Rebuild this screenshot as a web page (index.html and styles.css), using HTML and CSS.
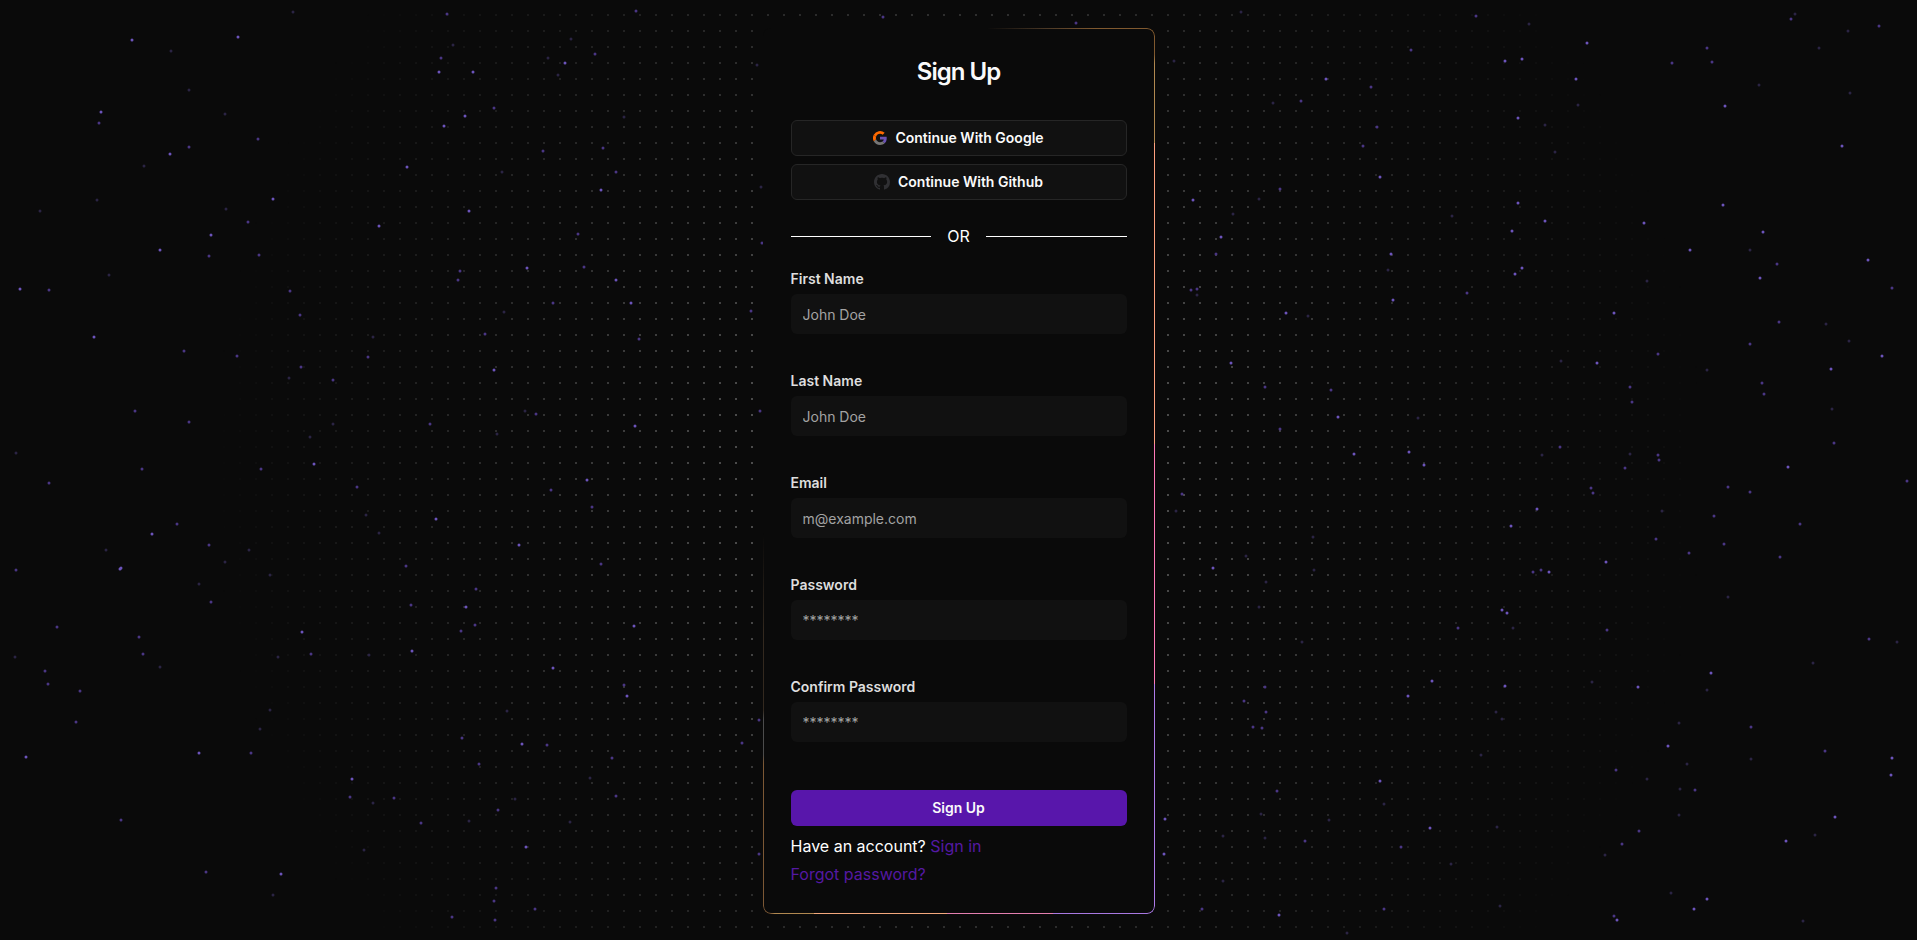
FILE: index.html
```html
<!DOCTYPE html>
<html lang="en">
<head>
    <meta charset="UTF-8">
    <meta name="viewport" content="width=device-width, initial-scale=1.0">
    <title>Sign Up</title>
    <link rel="stylesheet" href="styles.css">
</head>
<body>
    <div class="dots"></div>
    <svg class="stars" id="stars" viewBox="0 0 1917 940" preserveAspectRatio="xMidYMid slice" aria-hidden="true"></svg>

    <main class="page">
        <div class="card">
            <h1>Sign Up</h1>

            <div class="social">
                <button type="button" class="btn outline">
                    <svg class="icon-google" viewBox="0 0 24 24" aria-hidden="true">
                        <path fill="#6b52b5" d="M23.5 12.3c0-.8-.1-1.6-.2-2.3H12v4.5h6.5a5.500 5.500 0 0 1-2.400 3.600l3.900 3c2.300-2.100 3.500-5.200 3.500-8.800z"/>
                        <path fill="#757575" d="M12 24c3.200 0 6-1.100 8-2.900l-3.900-3c-1.100.7-2.500 1.200-4.100 1.200-3.100 0-5.800-2.100-6.700-5l-4 3.100C3.300 21.300 7.300 24 12 24z"/>
                        <path fill="#ff6a00" d="M5.300 14.300a7.200 7.200 0 0 1 0-4.600l-4-3.100a12 12 0 0 0 0 10.800z"/>
                        <path fill="#ff6a00" d="M12 4.800c1.800 0 3.300.6 4.600 1.800L20 3.200A12 12 0 0 0 1.300 6.600l4 3.100c.9-2.800 3.600-4.900 6.700-4.900z"/>
                    </svg>
                    Continue With Google
                </button>
                <button type="button" class="btn outline">
                    <svg class="icon-github" viewBox="0 0 16 16" aria-hidden="true">
                        <path fill="#303033" d="M8 0C3.580 0 0 3.580 0 8c0 3.540 2.290 6.530 5.470 7.590.4.070.55-.17.55-.38 0-.19-.01-.82-.01-1.490-2.010.37-2.530-.49-2.690-.94-.09-.23-.48-.94-.82-1.130-.28-.15-.68-.52-.01-.53.63-.01 1.080.58 1.230.82.72 1.210 1.870.87 2.330.66.070-.52.28-.87.51-1.070-1.780-.2-3.640-.89-3.640-3.950 0-.87.31-1.590.82-2.150-.08-.2-.36-1.020.08-2.120 0 0 .67-.21 2.200.82.64-.18 1.320-.27 2-.27s1.360.09 2 .27c1.530-1.040 2.200-.82 2.200-.82.44 1.100.16 1.920.08 2.120.51.56.82 1.270.82 2.150 0 3.070-1.870 3.750-3.650 3.950.29.25.54.73.54 1.480 0 1.070-.01 1.930-.01 2.200 0 .21.15.46.55.38A8.010 8.010 0 0 0 16 8c0-4.420-3.580-8-8-8z"/>
                    </svg>
                    Continue With Github
                </button>
            </div>

            <div class="divider">OR</div>

            <form>
                <div class="field">
                    <label for="firstName">First Name</label>
                    <input id="firstName" type="text" placeholder="John Doe">
                </div>
                <div class="field">
                    <label for="lastName">Last Name</label>
                    <input id="lastName" type="text" placeholder="John Doe">
                </div>
                <div class="field">
                    <label for="email">Email</label>
                    <input id="email" type="email" placeholder="m@example.com">
                </div>
                <div class="field">
                    <label for="password">Password</label>
                    <input id="password" type="password" placeholder="********">
                </div>
                <div class="field">
                    <label for="confirmPassword">Confirm Password</label>
                    <input id="confirmPassword" type="password" placeholder="********">
                </div>
                <button type="submit" class="btn primary">Sign Up</button>
            </form>

            <div class="links">
                <p>Have an account? <a href="#signin">Sign in</a></p>
                <p><a href="#forgot">Forgot password?</a></p>
            </div>
        </div>
    </main>
    <script src="script.js"></script>
</body>
</html>
```

FILE: styles.css
```css
* {
    box-sizing: border-box;
}
body {
    margin: 0;
    font-family: "Inter", sans-serif;
    font-size: 16px;
    line-height: 24px;
    background: #0a0a0a;
    color: #ffffff;
}
h1, p {
    margin: 0;
}

/* Background */
.dots, .stars {
    position: fixed;
    inset: 0;
    width: 100%;
    height: 100%;
    pointer-events: none;
}
.dots {
    background-image: conic-gradient(from 90deg at 14px 14px, #666666 90deg, transparent 0);
    background-size: 16px 16px;
    background-position: 1px 0;
    -webkit-mask-image: radial-gradient(circle, #000000, transparent 70%);
    mask-image: radial-gradient(circle, #000000, transparent 70%);
}
.star-1 {
    fill: #2b2444;
}
.star-2 {
    fill: #4a3684;
}
.star-3 {
    fill: #6c54bb;
}

.page {
    position: relative;
    min-height: 100vh;
    display: flex;
    align-items: center;
    justify-content: center;
    padding: 18px 16px 16px;
}

/* Card */
.card {
    position: relative;
    width: 100%;
    max-width: 392px;
    padding: 28px;
    border-radius: 8px;
    background: #0a0a0a;
}
/* shining edge: one strip per side, masked down to a 1px ring */
.card::before {
    content: "";
    position: absolute;
    inset: 0;
    padding: 1px;
    border-radius: inherit;
    pointer-events: none;
    background:
        linear-gradient(to bottom, #80592f 3%, #b08850 4% 13%, #ffa07f 13% 47%, #ff79b8 47% 74%, #ae7bea 74%) right / 8px 100% no-repeat,
        linear-gradient(to bottom, transparent 57%, #33291f 68% 77%, #4c4c4c 78% 82%, #7c5835 83%) left / 8px 100% no-repeat,
        linear-gradient(to right, transparent 57%, #4a3826 72%, #80592f 85%) top / 100% 8px no-repeat,
        linear-gradient(to right, #7c5835 2%, #b08850 3% 13%, #f3a87c 13% 47%, #e47fb0 47% 74%, #a878e2 74%) bottom / 100% 8px no-repeat;
    -webkit-mask: linear-gradient(#000 0 0) content-box exclude, linear-gradient(#000 0 0);
    mask: linear-gradient(#000 0 0) content-box exclude, linear-gradient(#000 0 0);
}
.card h1 {
    font-size: 24px;
    line-height: 32px;
    font-weight: 600;
    letter-spacing: -1px;
    text-align: center;
    color: #fafafa;
}

/* Buttons */
.btn {
    display: flex;
    align-items: center;
    justify-content: center;
    gap: 8px;
    width: 100%;
    height: 36px;
    padding: 0 16px;
    border: none;
    border-radius: 6px;
    font-family: inherit;
    font-size: 14px;
    line-height: 20px;
    font-weight: 600;
    color: #fafafa;
    cursor: pointer;
}
.btn.outline {
    background: #111111;
    border: 1px solid #262626;
}
.btn.outline:hover {
    background: #1c1c1c;
}
.btn.primary {
    background: #5816ab;
}
.btn.primary:hover {
    background: #4a1191;
}
.icon-google {
    width: 14px;
    height: 14px;
}
.icon-github {
    width: 16px;
    height: 16px;
}
.social {
    display: flex;
    flex-direction: column;
    gap: 8px;
    margin-top: 32px;
}

.divider {
    display: flex;
    align-items: center;
    gap: 16px;
    margin: 24px 0;
}
.divider::before, .divider::after {
    content: "";
    flex: 1;
    height: 1px;
    background: #ffffff;
}

/* Form */
.field {
    display: flex;
    flex-direction: column;
    gap: 8px;
    margin-bottom: 40px;
}
.field label {
    font-size: 14px;
    line-height: 14px;
    font-weight: 600;
    color: #dedede;
}
.field input {
    width: 100%;
    height: 40px;
    padding: 8px 12px;
    border: none;
    border-radius: 6px;
    background: #111111;
    font-family: inherit;
    font-size: 14px;
    color: #fafafa;
}
.field input::placeholder {
    color: #a3a3a3;
}
.field input:focus {
    outline: 1px solid #5816ab;
}
form .btn {
    margin-top: 48px;
}

.links {
    display: flex;
    flex-direction: column;
    gap: 4px;
    margin-top: 8px;
}
.links a {
    color: #5519a3;
    text-decoration: none;
}
.links a:hover {
    text-decoration: underline;
}
```

FILE: script.js
```js
// x, y, brightness (1 = faint, 3 = bright)
const stars = [
    [293,12,1],[447,14,2],[636,11,2],[132,40,3],[238,37,3],[171,51,1],[453,45,1],[441,58,2],[439,72,3],[473,72,3],
    [571,39,1],[548,58,1],[565,63,3],[595,54,2],[558,75,1],[189,90,1],[101,112,3],[99,123,2],[225,114,1],[494,108,2],
    [465,116,3],[444,126,3],[258,139,2],[189,147,2],[170,154,3],[144,166,1],[624,117,1],[543,151,2],[603,148,2],[407,167,3],
    [502,172,1],[616,172,2],[601,190,3],[469,211,3],[273,199,3],[97,200,1],[40,211,1],[226,209,1],[248,222,2],[211,235,3],
    [379,226,3],[160,250,3],[209,256,2],[259,255,2],[578,234,2],[527,268,3],[584,267,2],[460,271,2],[458,280,2],[616,280,3],
    [109,275,1],[20,289,3],[49,290,2],[290,291,2],[553,303,2],[631,303,3],[300,315,2],[504,312,1],[94,337,3],[373,337,1],
    [485,334,2],[639,339,2],[184,351,2],[237,356,2],[368,357,2],[301,367,2],[289,378,1],[333,380,2],[494,370,3],[135,411,2],
    [189,422,2],[333,424,1],[430,424,2],[525,411,1],[536,414,2],[497,434,1],[635,426,3],[310,437,1],[16,453,1],[314,464,3],
    [142,469,2],[261,469,2],[49,483,2],[357,487,2],[551,490,2],[587,480,3],[592,507,2],[366,515,1],[436,519,3],[177,524,2],
    [152,534,3],[379,533,1],[209,545,2],[519,545,3],[106,550,1],[249,550,1],[121,568,3],[120,569,3],[16,570,2],[225,562,1],
    [406,566,2],[601,564,2],[270,575,1],[199,584,1],[476,589,2],[211,602,2],[411,605,2],[466,607,3],[57,627,2],[475,625,2],
    [461,631,2],[302,632,3],[634,626,3],[139,637,2],[311,654,2],[143,654,2],[412,651,3],[369,655,1],[278,657,1],[15,657,1],
    [160,667,1],[553,668,3],[45,671,2],[48,684,2],[80,691,2],[624,685,2],[627,696,3],[270,710,1],[507,711,1],[76,722,2],
    [260,729,1],[462,738,2],[522,744,3],[547,745,2],[26,757,3],[199,753,3],[251,753,2],[612,758,2],[479,764,2],[352,779,3],
    [590,778,1],[350,797,2],[394,798,2],[373,803,1],[616,796,2],[515,799,1],[498,810,2],[469,821,1],[421,823,2],[570,822,1],
    [121,820,2],[364,850,1],[526,847,3],[206,872,2],[281,874,3],[273,895,1],[496,888,2],[494,901,2],[535,909,2],[452,917,2],
    [495,920,2],[883,17,2],[1076,23,2],[757,65,1],[761,187,1],[762,243,2],[751,311,2],[760,411,2],[759,720,2],[759,854,2],
    [742,743,2],[1476,16,2],[1529,24,1],[1791,19,2],[1795,14,1],[1241,12,1],[1587,43,3],[1411,50,2],[1522,59,3],[1505,61,3],
    [1707,48,2],[1712,62,2],[1672,63,2],[1819,48,1],[1848,31,1],[1879,26,2],[1174,61,1],[1326,79,3],[1371,87,2],[1576,79,3],
    [1759,85,1],[1301,101,2],[1273,103,1],[1578,105,1],[1725,106,3],[1850,93,1],[1377,127,2],[1518,118,3],[1545,125,1],[1363,146,2],
    [1842,146,3],[1555,152,1],[1380,177,3],[1280,189,2],[1193,200,3],[1259,199,1],[1518,203,3],[1723,205,3],[1452,216,1],[1233,214,1],
    [1545,221,3],[1644,223,3],[1512,231,3],[1763,232,3],[1221,237,3],[1216,254,2],[1391,254,3],[1690,250,3],[1750,250,1],[1868,260,3],
    [1777,264,2],[1522,268,3],[1515,274,3],[1760,278,3],[1388,270,1],[1647,281,1],[1191,290,2],[1197,289,2],[1197,295,1],[1467,293,2],
    [1892,288,2],[1393,300,3],[1286,313,3],[1308,316,1],[1614,313,3],[1779,322,2],[1826,324,1],[1750,344,2],[1849,341,1],[1882,356,3],
    [1658,354,2],[1597,363,3],[1561,361,1],[1231,363,3],[1707,370,1],[1831,369,3],[1762,383,2],[1265,387,2],[1331,390,2],[1630,387,2],
    [1764,394,2],[1632,402,2],[1832,409,1],[1338,417,3],[1418,418,1],[1280,429,2],[1834,443,2],[1560,447,2],[1354,454,3],[1409,452,3],
    [1542,455,1],[1630,454,1],[1658,455,2],[1424,465,3],[1659,460,2],[1788,467,3],[1625,468,2],[1591,488,2],[1593,493,2],[1728,487,2],
    [1750,492,2],[1907,481,2],[1182,494,2],[1176,511,1],[1537,509,3],[1662,511,1],[1714,516,2],[1511,526,3],[1313,537,1],[1800,524,2],
    [1656,539,2],[1724,544,2],[1689,553,2],[1246,556,1],[1780,557,2],[1606,562,3],[1213,568,3],[1314,570,1],[1533,572,2],[1541,570,2],
    [1549,572,3],[1266,582,1],[1728,597,1],[1259,607,1],[1502,610,3],[1507,613,3],[1458,628,2],[1513,628,1],[1607,630,2],[1869,639,2],
    [1897,642,1],[1302,642,1],[1813,663,1],[1711,673,3],[1432,681,3],[1592,682,1],[1265,687,2],[1505,686,3],[1638,687,3],[1707,690,1],
    [1408,696,3],[1244,701,2],[1266,712,2],[1496,712,1],[1502,719,1],[1679,723,1],[1253,727,2],[1262,728,2],[1751,727,2],[1668,746,3],
    [1481,755,1],[1825,751,2],[1892,758,3],[1751,759,1],[1687,764,1],[1616,770,2],[1891,775,3],[1647,779,1],[1380,781,3],[1680,789,1],
    [1695,790,2],[1277,791,2],[1384,804,1],[1261,814,1],[1165,819,3],[1679,815,1],[1835,817,3],[1329,820,1],[1430,828,3],[1497,827,1],
    [1639,831,2],[1223,836,1],[1265,838,1],[1815,835,1],[1786,841,3],[1305,841,2],[1622,844,2],[1401,847,2],[1164,854,3],[1605,855,1],
    [1451,864,1],[1223,881,1],[1671,893,1],[1707,899,3],[1500,906,1],[1202,909,2],[1384,909,2],[1694,909,3],[1279,915,3],[1614,916,2],
    [1617,920,3],[1803,921,1],[1347,933,1]
];

const sky = document.getElementById('stars');
stars.forEach(([x, y, level]) => {
    const star = document.createElementNS('http://www.w3.org/2000/svg', 'circle');
    star.setAttribute('cx', x);
    star.setAttribute('cy', y);
    star.setAttribute('r', 1.5);
    star.setAttribute('class', `star-${level}`);
    sky.appendChild(star);
});
```
